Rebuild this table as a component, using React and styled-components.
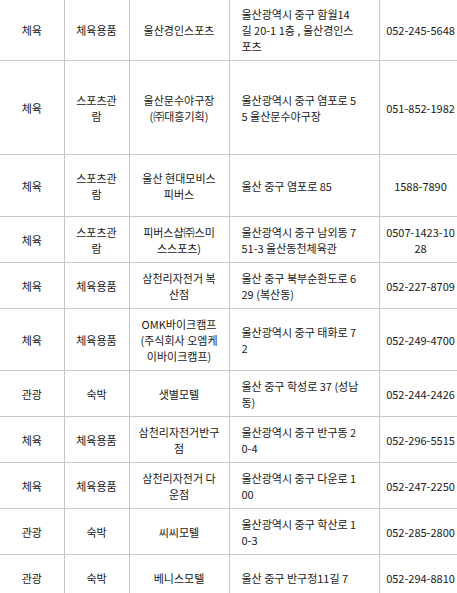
import React from "react";
import styled, { createGlobalStyle } from "styled-components";

const Global = createGlobalStyle`
  html, body {
    margin: 0;
    padding: 0;
    overflow: hidden;
    background: #fff;
  }
  body {
    font-family: "Noto Sans CJK KR", "Noto Sans", sans-serif;
    color: #1a1a1a;
  }
`;

const Page = styled.div`
  width: 457px;
  height: 593px;
  overflow: hidden;
`;

const Table = styled.table`
  border-collapse: collapse;
  table-layout: fixed;
  width: 462px;
  margin-top: -2px;
  font-size: 11px;
  line-height: 16px;
`;

const Col = styled.col`
  width: ${(p) => p.$w}px;
`;

const Row = styled.tr`
  height: ${(p) => p.$h}px;
`;

const Cell = styled.td`
  border: 1px solid #c8c8c8;
  padding: 0 4px;
  text-align: center;
  vertical-align: middle;
  white-space: nowrap;
  overflow: hidden;
  &:first-child {
    border-left: none;
  }
`;

const AddrCell = styled(Cell)`
  text-align: left;
  padding-left: 12px;
`;

const Lines = ({ text }) =>
  text.split("/").map((t, i, arr) => (
    <React.Fragment key={i}>
      {t}
      {i < arr.length - 1 && <br />}
    </React.Fragment>
  ));

const widths = [64, 65, 100, 150, 83];

const rows = [
  ["체육", "체육용품", "울산경인스포츠", "울산광역시 중구 함월14/길 20-1 1층 , 울산경인스/포츠", "052-245-5648", 62],
  ["체육", "스포츠관/람", "울산문수야구장/(㈜대흥기획)", "울산광역시 중구 염포로 5/5 울산문수야구장", "051-852-1982", 94],
  ["체육", "스포츠관/람", "울산 현대모비스/피버스", "울산 중구 염포로 85", "1588-7890", 62],
  ["체육", "스포츠관/람", "피버스샵㈜스미/스스포츠)", "울산광역시 중구 남외동 7/51-3 울산동천체육관", "0507-1423-10/28", 46],
  ["체육", "체육용품", "삼천리자전거 복/산점", "울산 중구 북부순환도로 6/29 (복산동)", "052-227-8709", 46],
  ["체육", "체육용품", "OMK바이크캠프/(주식회사 오엠케/이바이크캠프)", "울산광역시 중구 태화로 7/2", "052-249-4700", 62],
  ["관광", "숙박", "샛별모텔", "울산 중구 학성로 37 (성남/동)", "052-244-2426", 46],
  ["체육", "체육용품", "삼천리자전거반구/점", "울산광역시 중구 반구동 2/0-4", "052-296-5515", 46],
  ["체육", "체육용품", "삼천리자전거 다/운점", "울산광역시 중구 다운로 1/00", "052-247-2250", 46],
  ["관광", "숙박", "씨씨모텔", "울산광역시 중구 학산로 1/0-3", "052-285-2800", 46],
  ["관광", "숙박", "베니스모텔", "울산 중구 반구정11길 7", "052-294-8810", 46],
];

export default function App() {
  return (
    <Page>
      <Global />
      <Table>
        <colgroup>
          {widths.map((w, i) => (
            <Col key={i} $w={w} />
          ))}
        </colgroup>
        <tbody>
          {rows.map((r, i) => (
            <Row key={i} $h={r[5]}>
              <Cell>{r[0]}</Cell>
              <Cell><Lines text={r[1]} /></Cell>
              <Cell><Lines text={r[2]} /></Cell>
              <AddrCell><Lines text={r[3]} /></AddrCell>
              <Cell><Lines text={r[4]} /></Cell>
            </Row>
          ))}
        </tbody>
      </Table>
    </Page>
  );
}
